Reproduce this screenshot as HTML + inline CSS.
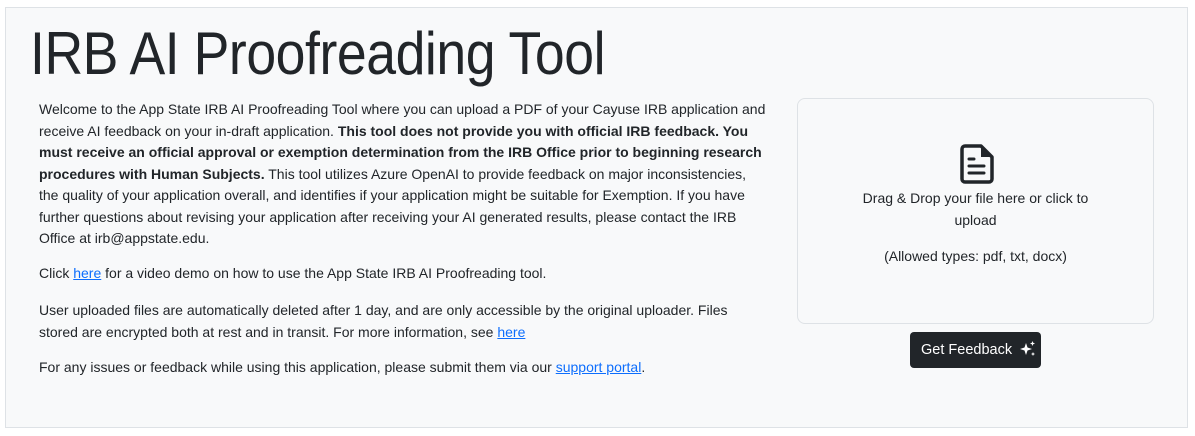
<!DOCTYPE html>
<html><head><meta charset="utf-8"><style>
body{margin:0;background:#fff;font-family:"Liberation Sans",sans-serif;color:#212529;}
.wrap{position:absolute;left:5px;top:7px;width:1183px;height:421px;background:#f8f9fa;border:1px solid #dee2e6;box-sizing:border-box;}
h1{position:absolute;left:24px;top:10px;margin:0;font-weight:300;font-size:60px;line-height:72px;white-space:nowrap;letter-spacing:-0.5px;transform:scaleX(0.893);transform-origin:0 0;}
.txt{position:absolute;left:33px;top:91px;width:760px;font-size:14px;line-height:21.5px;white-space:nowrap;}
.txt p{margin:0 0 13.5px}
.txt p.b{margin-bottom:15.5px}
a{color:#0d6efd;}
.card{position:absolute;left:791px;top:90px;width:357px;height:226px;border:1px solid #dee2e6;border-radius:8px;box-sizing:border-box;text-align:center;font-size:14px;line-height:22px;}
.btn{position:absolute;left:904px;top:324px;width:131px;height:36px;background:#212529;border-radius:4px;color:#fff;font-size:14.5px;line-height:36px;box-sizing:border-box;padding-left:11px;}
</style></head><body>
<div class="wrap">
<h1>IRB AI Proofreading Tool</h1>
<div class="txt">
<p>Welcome to the App State IRB AI Proofreading Tool where you can upload a PDF of your Cayuse IRB application and<br>receive AI feedback on your in-draft application. <b>This tool does not provide you with official IRB feedback. You<br>must receive an official approval or exemption determination from the IRB Office prior to beginning research<br>procedures with Human Subjects.</b> This tool utilizes Azure OpenAI to provide feedback on major inconsistencies,<br>the quality of your application overall, and identifies if your application might be suitable for Exemption. If you have<br>further questions about revising your application after receiving your AI generated results, please contact the IRB<br>Office at irb@appstate.edu.</p>
<p class="b">Click <a href="#">here</a> for a video demo on how to use the App State IRB AI Proofreading tool.</p>
<p>User uploaded files are automatically deleted after 1 day, and are only accessible by the original uploader. Files<br>stored are encrypted both at rest and in transit. For more information, see <a href="#">here</a></p>
<p>For any issues or feedback while using this application, please submit them via our <a href="#">support portal</a>.</p>
</div>
<div class="card">
<svg style="position:absolute;left:162px;top:45px" width="34" height="40" viewBox="0 0 34 40"><path d="M5 2h16l11 11v22a3 3 0 0 1-3 3H5a3 3 0 0 1-3-3V5a3 3 0 0 1 3-3z" fill="none" stroke="#212529" stroke-width="3.5" stroke-linejoin="round"/><path d="M21 2v11h11" fill="#212529"/><path d="M9 15h5M9 22h15M9 29h15" stroke="#212529" stroke-width="3" stroke-linecap="round"/></svg>
<div style="position:absolute;left:0;right:0;top:88px">Drag &amp; Drop your file here or click to<br>upload</div>
<div style="position:absolute;left:0;right:0;top:146px">(Allowed types: pdf, txt, docx)</div>
</div>
<div class="btn">Get Feedback <svg style="vertical-align:-4px;margin-left:3px" width="18" height="18" viewBox="0 0 18 18" fill="#fff"><path d="M7 3l1.5 4.5L13 9l-4.5 1.5L7 15l-1.5-4.5L1 9l4.5-1.5z"/><path d="M13.5 1l.7 1.8 1.8.7-1.8.7-.7 1.8-.7-1.8-1.8-.7 1.8-.7z"/><path d="M14 12l.6 1.4 1.4.6-1.4.6-.6 1.4-.6-1.4-1.4-.6 1.4-.6z"/></svg></div>
</div>
</body></html>
